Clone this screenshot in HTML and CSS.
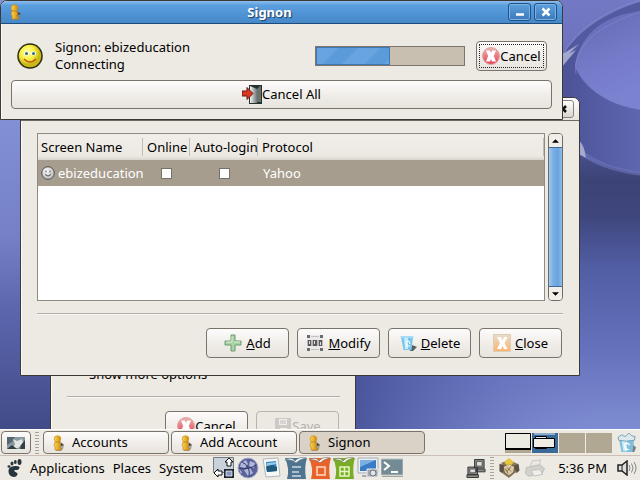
FILE: index.html
```
<!DOCTYPE html>
<html lang="en">
<head>
  <meta charset="UTF-8" />
  <meta name="viewport" content="width=device-width, initial-scale=1.0"/>
  <title>Signon</title>
  <link rel="stylesheet" href="styles.css">
</head>
<body>
  <!-- shared icons -->
  <svg class="defs" aria-hidden="true">
    <defs>
      <radialGradient id="yellow" cx="40%" cy="35%">
        <stop offset="0" stop-color="#ffffb0"/><stop offset=".6" stop-color="#f8f040"/><stop offset="1" stop-color="#c8b818"/>
      </radialGradient>
      <radialGradient id="silver" cx="40%" cy="35%">
        <stop offset="0" stop-color="#fff"/><stop offset="1" stop-color="#c8c8c8"/>
      </radialGradient>
      <linearGradient id="red" x2="0" y2="1">
        <stop offset="0" stop-color="#e8b4b0"/><stop offset="1" stop-color="#ea4058"/>
      </linearGradient>
      <linearGradient id="peach" x2="0" y2="1">
        <stop offset="0" stop-color="#e8dccb"/><stop offset="1" stop-color="#f9b672"/>
      </linearGradient>
      <linearGradient id="gold" x2="1">
        <stop offset="0" stop-color="#ffd84c"/><stop offset="1" stop-color="#d08a10"/>
      </linearGradient>
      <linearGradient id="door" x2="1">
        <stop offset="0" stop-color="#f4f4f4"/><stop offset="1" stop-color="#6e7674"/>
      </linearGradient>
    </defs>
    <symbol id="buddy" viewBox="0 0 14 16">
      <path d="M8 6l4 4-1 4-2 2H4l1-4z" fill="#8a8478" opacity=".7"/>
      <circle cx="5.500" cy="4" r="3.300" fill="url(#gold)" stroke="#c8880f" stroke-width=".6"/>
      <path d="M3.500 7h4l1 2v2l-1 1 2 1.500V15H3v-3l-1-2 1-3z" fill="url(#gold)" stroke="#b87a10" stroke-width=".6"/>
      <path d="M9 8l3 2-3 1z" fill="#444"/>
    </symbol>
    <symbol id="stop" viewBox="0 0 18 18">
      <circle cx="9" cy="9" r="8.500" fill="url(#red)" stroke="#dcaaa6"/>
      <path d="M4 3.500h4l1 2.500 1-2.500h4L11.800 9l2.200 5.500h-4L9 12l-1 2.500H4L6.200 9z" fill="#fff"/>
    </symbol>
  </svg>

  <main class="workspace">
    <svg class="wallpaper" viewBox="0 0 640 430" preserveAspectRatio="none" aria-hidden="true">
      <defs>
        <linearGradient id="sky" x2="0" y2="1">
          <stop offset="0" stop-color="#7479c6"/><stop offset=".16" stop-color="#6b70ba"/>
          <stop offset=".32" stop-color="#4f5699"/><stop offset=".42" stop-color="#3c4375"/>
          <stop offset=".5" stop-color="#3e467c"/><stop offset=".62" stop-color="#515da3"/>
          <stop offset=".82" stop-color="#6672bd"/><stop offset="1" stop-color="#7e8dd2"/>
        </linearGradient>
        <linearGradient id="left" x2="0" y2="1">
          <stop offset=".28" stop-color="#8290d6"/><stop offset=".55" stop-color="#7580c6"/>
          <stop offset=".72" stop-color="#5c66ad"/><stop offset="1" stop-color="#414b88"/>
        </linearGradient>
        <linearGradient id="floor" x2="1">
          <stop offset="0" stop-color="#3f4a90" stop-opacity=".8"/><stop offset=".5" stop-color="#5b68b2" stop-opacity=".5"/><stop offset="1" stop-color="#7683cd" stop-opacity="0"/>
        </linearGradient>
        <linearGradient id="pool" x2=".3" y2="1">
          <stop offset="0" stop-color="#6468b4"/><stop offset=".6" stop-color="#757bc8"/><stop offset="1" stop-color="#7b82d0"/>
        </linearGradient>
        <linearGradient id="rim" x2="1">
          <stop offset="0" stop-color="#4b5296"/><stop offset="1" stop-color="#5e66b0"/>
        </linearGradient>
      </defs>
      <rect width="640" height="430" fill="url(#sky)"/>
      <rect x="355" y="370" width="250" height="60" fill="url(#floor)"/>
      <rect width="60" height="430" fill="url(#left)"/>
      <path d="M560 60C575 34 605 10 640 4V174C605 168 580 158 560 142z" fill="url(#rim)"/>
      <path d="M564 56C576 36 604 12 640 2V10C608 18 584 36 572 58z" fill="#545a9f"/>
      <path d="M640 12C600 14 578 40 575 67C586 92 612 106 640 110z" fill="url(#pool)"/>
      <path d="M563 56c8-20 33-42 77-56" fill="none" stroke="#8a8fc8" opacity=".6"/>
      <path d="M576 74c-3-20 10-44 64-62" fill="none" stroke="#8a8fc8" opacity=".5"/>
      <path d="M563 66l13-16-7 4 10-10-16 10z" fill="#b8bbda" opacity=".8"/>
      <path d="M582 150c12 10 30 18 58 22v4c-30-4-50-13-60-21z" fill="#6d74ba" opacity=".6"/>
      <path d="M580 142c4 4 5 10 6 16l-6-3z" fill="#a4a9d0"/>
    </svg>

    <!-- Add Account -->
    <section class="window window-add" aria-label="Add Account">
      <p class="expander">Show more options</p>
      <div class="button-row">
        <button class="btn" type="button"><svg class="icon"><use href="#stop"/></svg>Cancel</button>
        <button class="btn" type="button" disabled>
          <svg class="icon" viewBox="0 0 18 18"><path d="M1 1h16v14H3l-2-2z" fill="#cdcac5"/><path d="M5 2h8v6H5zM6 11h7v4H6z" fill="#f0eeeb"/><path d="M6 4h6M6 6h6" stroke="#bbb"/></svg>Save
        </button>
      </div>
    </section>

    <!-- Accounts -->
    <section class="window window-accounts" aria-label="Accounts">
      <header class="titlebar inactive">
        <button class="win-btn" type="button" aria-label="Close window"><svg viewBox="0 0 10 10"><path d="M2 2l6 6M8 2l-6 6" stroke="#111" stroke-width="2.500"/></svg></button>
      </header>
      <div class="accounts-body">
        <div class="list-area">
          <div class="list">
            <table>
              <thead>
                <tr><th class="col-name">Screen Name</th><th class="col-online">Online</th><th class="col-auto">Auto-login</th><th>Protocol</th></tr>
              </thead>
              <tbody>
                <tr>
                  <td><span class="buddy-name"><svg class="face" viewBox="0 0 14 14"><circle cx="7" cy="7" r="6.300" fill="url(#silver)" stroke="#4c4c4c"/><path d="M5 4.500v2M9 4.500v2M4 8.500q3 3 6 0" fill="none" stroke="#555"/></svg>ebizeducation</span></td>
                  <td class="check"><input type="checkbox" aria-label="Online"></td>
                  <td class="check"><input type="checkbox" aria-label="Auto-login"></td>
                  <td class="protocol">Yahoo</td>
                </tr>
              </tbody>
            </table>
          </div>
          <div class="scrollbar">
            <button type="button" aria-label="Scroll up"><svg viewBox="0 0 8 4"><path d="M4 0l4 4H0z"/></svg></button>
            <div class="thumb"></div>
            <button type="button" aria-label="Scroll down"><svg viewBox="0 0 8 4"><path d="M0 0h8L4 4z"/></svg></button>
          </div>
        </div>
        <div class="button-row">
          <button class="btn" type="button">
            <svg class="icon" viewBox="0 0 18 18"><path d="M7 1h4v6h6v4h-6v6H7v-6H1V7h6z" fill="#a8d3a4" stroke="#6d9a70"/><path d="M8 2.500v5.500H2.500M10 8h6" fill="none" stroke="#d8efd5"/></svg><span><u>A</u>dd</span>
          </button>
          <button class="btn" type="button">
            <svg class="icon" viewBox="0 0 18 18"><path d="M1 1h16v16H1z" fill="#eceae8"/><path d="M1 6h16v6H1z" fill="#b9b7b8"/><path d="M2 6h3v6H2zM7 6h4v6H7zM13 6h3v6h-3z" fill="#5c5a5e"/><path d="M3.500 7v3M8.500 7v3M14.500 8v3" stroke="#ddd"/><path d="M1 1h3v3H1zM14 1h3v3h-3zM1 14h3v3H1zM14 14h3v3h-3z" fill="#6c6a6f"/><path d="M5 2.500h8M5 15.500h8" stroke="#c4c2c2"/></svg><span><u>M</u>odify</span>
          </button>
          <button class="btn" type="button">
            <svg class="icon" viewBox="0 0 18 18"><path d="M13 11l5 2-4 4h-3z" fill="#56605f"/><path d="M2 3h12l-1.500 13h-8z" fill="#79c4ec"/><path d="M5 4l1 11h3V4z" fill="#c5ecfb"/><path d="M1.500 3h13" stroke="#a7dbf3" stroke-width="2"/><path d="M7 8l3-1 1 3M7 9l1 3h3" fill="none" stroke="#fff"/></svg><span><u>D</u>elete</span>
          </button>
          <button class="btn" type="button">
            <svg class="icon" viewBox="0 0 18 18"><path d="M.5.500h17v17H.5z" fill="url(#peach)" stroke="#dccdb9"/><path d="M4 3h4l1.500 3.500L11 3h3.500l-3 6 3 6H11l-1.500-3L8 15H4l3-6z" fill="#fff"/></svg><span><u>C</u>lose</span>
          </button>
        </div>
      </div>
    </section>

    <!-- Signon -->
    <section class="window window-signon" aria-label="Signon">
      <header class="titlebar">
        <svg class="title-icon"><use href="#buddy"/></svg>
        <h1>Signon</h1>
        <button class="win-btn" type="button" aria-label="Minimize"><svg viewBox="0 0 10 10"><path d="M1 7.500h8" stroke="#fff" stroke-width="2.500"/></svg></button>
        <button class="win-btn" type="button" aria-label="Close"><svg viewBox="0 0 10 10"><path d="M1.500 1.500l7 7M8.500 1.500l-7 7" stroke="#fff" stroke-width="2.500"/></svg></button>
      </header>
      <div class="signon-body">
        <div class="signon-row">
          <svg class="smiley" viewBox="0 0 26 26"><circle cx="13" cy="13" r="12" fill="url(#yellow)" stroke="#2e2c14" stroke-width="1.500"/><ellipse cx="9.500" cy="10.500" rx="2.500" ry="2" fill="#fff"/><ellipse cx="16.500" cy="10.500" rx="2.500" ry="2" fill="#fff"/><circle cx="9.500" cy="10.500" r="1.500" fill="#2c6a86"/><circle cx="16.500" cy="10.500" r="1.500" fill="#2c6a86"/><path d="M7 16q6 6 12 0" fill="none" stroke="#c8501c" stroke-width="1.500"/></svg>
          <p>Signon: ebizeducation<br>Connecting</p>
          <div class="progress" role="progressbar" aria-label="Connecting" aria-valuenow="50"><div class="bar" style="width: 50%"></div></div>
          <button class="btn focused" type="button"><svg class="icon"><use href="#stop"/></svg>Cancel</button>
        </div>
        <button class="btn wide" type="button">
          <svg class="icon door" viewBox="0 0 20 19"><path d="M7 0h13v19H7z" fill="#26312f"/><path d="M8 1l7 3v14H8z" fill="url(#door)"/><path d="M15 4l3-3h1v16h-4z" fill="#67736e"/><path d="M0 6h5V2.500l6 6-6 6V11H0z" fill="#d83820" stroke="#6b170e"/></svg>Cancel All
        </button>
      </div>
    </section>
  </main>

  <footer class="panels">
    <div class="panel">
      <button class="btn show-desktop" type="button" aria-label="Show desktop"><svg viewBox="0 0 18 12"><path d="M0 0h18v12H0z" fill="#8a9aa2"/><path d="M0 0h8l-3 5-5 3z" fill="#546872"/><path d="M6 2l4 2 5-2 1 4-5 5H6l2-4z" fill="#e2e6e2"/><path d="M0 12l5-4 5 4zM14 8l4-5v9h-5z" fill="#333f42"/></svg></button>
      <span class="grip"></span>
      <button class="btn task" type="button"><svg><use href="#buddy"/></svg>Accounts</button>
      <button class="btn task" type="button"><svg><use href="#buddy"/></svg>Add Account</button>
      <button class="btn task active" type="button"><svg><use href="#buddy"/></svg>Signon</button>
      <svg class="pager" viewBox="0 0 107 20" aria-label="Workspaces"><path d="M0 0h107v20H0z" fill="#b1a894"/><path d="M27 0h26v20H27z" fill="#3b6a98"/><path d="M26.500 0v20M53.500 0v20M80.500 0v20" stroke="#efece6"/><path d="M.5.500h25v16H.5z" fill="#ecebe2" stroke="#000"/><path d="M0 16h26" stroke="#000" stroke-width="2"/><path d="M29 1h21" stroke="#dff0ff"/><path d="M30.500 3.500h11v12h-11z" fill="#dfe9f0" stroke="#000"/><path d="M28.500 5.500h21v9h-21z" fill="#f0eee4" stroke="#000"/></svg>
      <svg class="trash" viewBox="0 0 22 22"><path d="M17 12l4 4-2 5h-7z" fill="#77827e"/><path d="M2 6h17l-2 15H5z" fill="#7fc0dc"/><path d="M5 8l2 12h4V8z" fill="#cdecf5"/><path d="M1 5l4-3 4 2 4-4 3 3 4 1-1 4-9 1-8-1z" fill="#dce9ec" stroke="#6d9db2"/><path d="M8 13l3-2 3 2M8 14l2 4h3" fill="none" stroke="#fff" stroke-width="1.500"/></svg>
    </div>
    <div class="panel menu-panel">
      <svg class="foot" viewBox="0 0 16 18"><ellipse cx="2.500" cy="7.500" rx="1.500" ry="1.200"/><ellipse cx="5.500" cy="4.500" rx="1.500" ry="2"/><ellipse cx="8.800" cy="3" rx="1.400" ry="2"/><ellipse cx="13" cy="3" rx="2" ry="3"/><path d="M2 12c0-4 4-5 8-5 5 0 3 4 0 4s-3 1-1 2 3 2 1 4-8 1-8-5z"/></svg>
      <nav>
        <button type="button">Applications</button>
        <button type="button">Places</button>
        <button type="button">System</button>
      </nav>
      <div class="launchers">
        <button type="button" aria-label="Switch display"><svg viewBox="0 0 22 22"><path d="M.5.500h20v15H.5z" fill="#c9d2da" stroke="#727c85"/><path d="M16 1l4 4h-2v4h-4V5h-2zM1 16l4-4v2h4v4H5v2z" fill="#fff" stroke="#111"/><path d="M11 12h10v9H11z" fill="#1c2433"/><path d="M13 14h6v5h-6z" fill="#8497ba" stroke="#fff" stroke-width=".7"/></svg></button>
        <button type="button" aria-label="Web browser"><svg viewBox="0 0 22 22"><circle cx="11" cy="11" r="10" fill="#5a629c" stroke="#aaaeca"/><path d="M4 6l5-3 2 4-3 4-5-1zM13 4l5 2-1 5-5-2zM7 13l6-2 3 5-5 3zM2 12l3 3-1 2z" fill="#c8cde8" opacity=".8"/><path d="M5 5q9 4 7 15M2 11q10 2 17-3" fill="none" stroke="#303966"/></svg></button>
        <button type="button" aria-label="Mail"><svg viewBox="0 0 22 22"><path d="M2 2l15-1 2 18-14 1z" fill="#f7f7f4" stroke="#aeb7c0"/><path d="M5 5l10-1 1 10-10 1z" fill="#3683c6"/><path d="M5 10l4-3 7 3v4l-10 1z" fill="#205a7a"/><path d="M6 6l9-1v2l-9 2z" fill="#91c9e8"/></svg></button>
        <button type="button" aria-label="Writer"><svg viewBox="0 0 22 22"><path d="M0 1h22q-3 8-1 21H2Q5 12 0 1z" fill="#50738f"/><path d="M0 3q7-4 10 1 4-5 11-3-6 1-10 5-4-4-11-3z" fill="#eef4f6" stroke="#647b87" stroke-width=".6"/><path d="M7 10h9M7 15h7M7 19h9" stroke="#c8dce6" stroke-width="1.500"/></svg></button>
        <button type="button" aria-label="Impress"><svg viewBox="0 0 22 22"><path d="M0 1h22q-3 8-1 21H2Q5 12 0 1z" fill="#e8622a"/><path d="M0 3q7-4 10 1 4-5 11-3-6 1-10 5-4-4-11-3z" fill="#f5f5f2" stroke="#776a60" stroke-width=".6"/><path d="M8 10h8v8H8z" fill="none" stroke="#ffdcc6" stroke-width="1.500"/></svg></button>
        <button type="button" aria-label="Calc"><svg viewBox="0 0 22 22"><path d="M0 1h22q-3 8-1 21H2Q5 12 0 1z" fill="#79ad26"/><path d="M0 3q7-4 10 1 4-5 11-3-6 1-10 5-4-4-11-3z" fill="#f5f5f2" stroke="#687452" stroke-width=".6"/><path d="M7 10h9v9H7zM11.500 10v9M7 14.500h9" fill="none" stroke="#e6f6c2" stroke-width="1.500"/></svg></button>
        <button type="button" aria-label="Screenshot"><svg viewBox="0 0 22 22"><path d="M1 1h20v15H1z" fill="#eceff2" stroke="#a3acb5"/><path d="M3 3h16v11H3z" fill="#397bc5"/><path d="M3 3h16L3 10z" fill="#7cb0e3"/><path d="M5 18h7v2H5z" fill="#aaa"/><path d="M10 12h11v8H10z" fill="#a5aaae" stroke="#eee"/><circle cx="16" cy="16" r="3" fill="#dce5ea" stroke="#68747e"/></svg></button>
        <button type="button" aria-label="Terminal"><svg viewBox="0 0 22 22"><path d="M0 2h22v16H0z" fill="#738b95" stroke="#b8c0c2"/><path d="M3 5l5 4-5 4M10 15h7" fill="none" stroke="#fff" stroke-width="2"/><path d="M1 19.500h21" stroke="#a5a5a0"/></svg></button>
      </div>
      <div class="tray">
        <svg class="net" viewBox="0 0 20 20"><g fill="#8a8c8a" stroke="#333"><path d="M8.500.500h10v9h-10zM10.500 10.500h9v3h-9zM1.500 8.500h10v8h-10zM.5 16.500h12v3H.5z"/></g><path d="M10.500 2.500h6v5h-6zM3.500 10.500h6v4h-6z" fill="#dcdedc" stroke="#555"/></svg>
        <span class="grip"></span>
        <svg class="updates" viewBox="0 0 22 22"><path d="M3 5l8-3 9 4-2 9-7 6-7-5z" fill="#8d7a61"/><path d="M1 6l6 2-3 8-3-2zM21 6l-5 2 3 8 3-3z" fill="#5b5147"/><path d="M5 9l6-3 6 3-1 6-5 4-5-4z" fill="#dcc8a2" stroke="#60503d"/><path d="M9 10l4 4M13 9l-4 5M7 11l3 5" stroke="#7c664b"/><path d="M6 4l5-4 5 4-2 3H8z" fill="#e6c63a"/></svg>
        <svg class="printer" viewBox="0 0 22 22"><path d="M8 3l9-1-2 7-9 1z" fill="#e9e8e5" stroke="#c7c5c1"/><path d="M2 10l14-3 5 4-3 6-14 2-3-3z" fill="#d3d1cc" stroke="#bebcb7"/><path d="M7 13l9-1 3 5-9 2z" fill="#f0efec" stroke="#c3c1bd"/></svg>
        <time>5:36 PM</time>
        <svg class="volume" viewBox="0 0 20 16"><path d="M1 5h4l5-4v14l-5-4H1z" fill="#ddd" stroke="#222" stroke-width="1.500"/><path d="M5 5v6" stroke="#222"/><path d="M12 5q2 3 0 6M14.500 3.500q3 4.500 0 9M17 2q4 6 0 12" fill="none" stroke="#888"/></svg>
      </div>
    </div>
  </footer>
</body>
</html>
```
FILE: styles.css
```
* {
  box-sizing: border-box;
}

body {
  margin: 0;
  height: 100vh;
  display: flex;
  flex-direction: column;
  overflow: hidden;
  font-family: 'Noto Sans', 'Open Sans', sans-serif;
  font-size: 13px;
  line-height: 17px;
  color: #000;
}

p, h1 {
  margin: 0;
}

button {
  font: inherit;
  color: inherit;
  padding: 0;
}

svg {
  display: block;
  flex: none;
}

.defs {
  position: absolute;
  width: 0;
  height: 0;
}

.workspace {
  flex: 1;
  min-height: 0;
  position: relative;
  overflow: hidden;
  background: #6b76bd;
}

.wallpaper {
  width: 100%;
  height: 100%;
}

/* windows */
.window {
  position: absolute;
  background: #ede9e3;
  border: 1px solid #3c3a38;
  box-shadow: inset 1px 0 #fbfaf8;
}

.window-add {
  left: 50px;
  top: 340px;
  width: 306px;
  padding: 25px 15px 17px 16px;
}

.window-accounts {
  left: 20px;
  top: 97px;
  width: 560px;
  border-radius: 7px 7px 0 0;
}

.window-signon {
  left: 0;
  top: 0;
  width: 563px;
  border-radius: 7px 7px 0 0;
}

.titlebar {
  height: 23px;
  display: flex;
  align-items: center;
  gap: 3px;
  padding: 0 5px 0 8px;
  border-bottom: 1px solid #1e4a7c;
  border-radius: 6px 6px 0 0;
  background: linear-gradient(#8cbcec, #5b9fde 20%, #4f93d5 60%, #4788c8);
}

.titlebar.inactive {
  justify-content: flex-end;
  border-color: #6e6862;
  background: linear-gradient(#fff, #e6e2dc);
}

.titlebar h1 {
  flex: 1;
  padding-left: 8px;
  font-size: 13px;
  line-height: 17px;
  text-align: center;
  color: #fff;
  text-shadow: 1px 1px 1px #1c3d66;
}

.title-icon {
  width: 14px;
  height: 16px;
}

.win-btn {
  width: 23px;
  height: 18px;
  display: grid;
  place-items: center;
  border: 1px solid #1f5189;
  border-radius: 3px;
  background: linear-gradient(#5e9fdc, #3c7abb);
  box-shadow: inset 0 0 0 1px #7db2e6;
}

.win-btn svg {
  width: 10px;
  height: 10px;
}

.inactive .win-btn {
  border-color: #8a847c;
  background: linear-gradient(#fff, #d8d4cd);
  box-shadow: none;
}

.btn {
  display: flex;
  align-items: center;
  justify-content: center;
  border: 1px solid #79736b;
  border-radius: 4px;
  background: linear-gradient(#fdfcfb, #f1eeea 50%, #e7e3dd);
}

.btn:disabled {
  color: #b5b1aa;
  border-color: #b9b4ac;
  background: #ece8e2;
}

.icon {
  width: 18px;
  height: 18px;
}

.button-row {
  display: flex;
  justify-content: flex-end;
  gap: 8px;
  margin-top: 12px;
  padding: 14px 1px 0 0;
  border-top: 1px solid #b3aea6;
  box-shadow: inset 0 1px #f8f6f3;
}

.button-row .btn {
  width: 83px;
  height: 30px;
}

.window-accounts .btn {
  gap: 4px;
}

.expander {
  padding-left: 22px;
}

.window-add .button-row {
  margin-top: 13px;
}

/* signon window */
.signon-body {
  padding: 15px 10px 10px;
}

.signon-row {
  display: flex;
  align-items: center;
  margin-bottom: 7px;
  padding: 0 5px 0 6px;
}

.signon-row p {
  flex: 1;
  padding-left: 12px;
}

.smiley {
  width: 26px;
  height: 26px;
}

.progress {
  width: 150px;
  height: 20px;
  margin-right: 11px;
  border: 1px solid #7c756b;
  background: #c9bfb1;
}

.bar {
  height: 100%;
  border: 1px solid #3f79b4;
  background: repeating-linear-gradient(135deg, #68a5e0 0 14px, #5b9bd9 16px 28px, #68a5e0 30px);
}

.focused {
  width: 71px;
  height: 30px;
  outline: 1px dotted #222;
  outline-offset: -4px;
}

.wide {
  width: 100%;
  height: 29px;
}

.icon.door {
  width: 20px;
  height: 19px;
}

/* accounts window */
.accounts-body {
  padding: 12px 16px 17px;
}

.list-area {
  display: flex;
  gap: 3px;
}

.list {
  flex: 1;
  height: 168px;
  border: 1px solid #8f8a82;
  background: #fff;
}

table {
  width: 100%;
  table-layout: fixed;
  border-collapse: collapse;
}

th {
  height: 26px;
  padding: 0 4px;
  font-weight: normal;
  text-align: left;
  white-space: nowrap;
  background: linear-gradient(to top, #c3beb5, #c3beb5) right / 1px 18px no-repeat,
    linear-gradient(#f1eeea, #ece8e2 85%, #d9d5cd);
}

th:first-child {
  padding-left: 3px;
}

td {
  height: 26px;
  padding: 0 3px;
  background: #a69d8e;
  color: #fff;
}

.col-name {
  width: 105px;
}

.col-online {
  width: 47px;
}

.col-auto {
  width: 68px;
}

.buddy-name {
  display: flex;
  align-items: center;
  gap: 3px;
}

.face {
  width: 14px;
  height: 14px;
}

.check {
  text-align: center;
}

.check input {
  appearance: none;
  display: block;
  width: 11px;
  height: 11px;
  margin: 0 auto;
  border: 1px solid #777168;
  background: #fff;
}

.protocol {
  padding-left: 5px;
}

.scrollbar {
  width: 15px;
  display: flex;
  flex-direction: column;
  border: 1px solid #6f6a62;
  border-radius: 4px;
  overflow: hidden;
}

.scrollbar button {
  height: 13px;
  display: grid;
  place-items: center;
  border: 0;
  background: #f1eeea;
}

.scrollbar svg {
  width: 7px;
  height: 4px;
}

.thumb {
  flex: 1;
  border: 1px solid #3e6a98;
  border-width: 1px 0;
  background: linear-gradient(to right, #a2caf0, #7ab0e4 30%, #69a3dc 70%, #8fbeea);
}

/* panels */
.panel {
  height: 26px;
  display: flex;
  align-items: center;
  padding: 0 2px 0 1px;
  border-top: 1px solid #fff;
  background: #ede9e3;
}

.menu-panel {
  height: 25px;
  padding: 0 3px 0 6px;
  border-top-color: #cdbfb5;
}

.show-desktop {
  width: 30px;
  height: 23px;
}

.show-desktop svg {
  width: 18px;
  height: 12px;
}

.grip {
  width: 4px;
  height: 22px;
  margin: 0 4px;
  background: repeating-linear-gradient(#a8a39b 0 1px, transparent 1px 3px);
}

.task {
  flex: 0 1 126px;
  height: 23px;
  justify-content: flex-start;
  gap: 6px;
  margin-right: 2px;
  padding-left: 8px;
}

.task svg {
  width: 14px;
  height: 16px;
}

.task.active {
  background: #dad2c7;
}

.pager {
  width: 107px;
  height: 20px;
  margin-left: auto;
}

.trash {
  width: 22px;
  height: 20px;
  margin-left: 4px;
}

.foot {
  width: 17px;
  height: 18px;
  fill: #26343c;
}

nav {
  display: flex;
  gap: 8px;
  padding-left: 7px;
}

nav button, .launchers button {
  border: 0;
  background: none;
}

.launchers {
  display: flex;
  gap: 2px;
  padding-left: 10px;
}

.launchers svg {
  width: 22px;
  height: 22px;
}

.tray {
  display: flex;
  align-items: center;
  margin-left: auto;
}

.net, .volume {
  width: 20px;
  height: 19px;
}

.volume {
  height: 16px;
}

.updates, .printer {
  width: 22px;
  height: 21px;
}

.printer {
  margin: 0 12px 0 4px;
}

time {
  margin-right: 10px;
}
```
